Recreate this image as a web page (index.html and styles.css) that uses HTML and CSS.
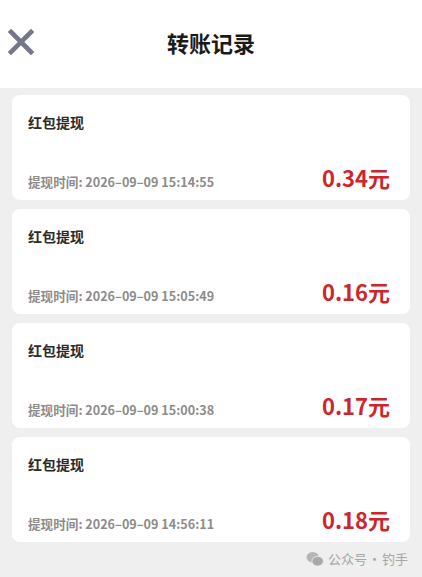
FILE: index.html
```html
<!DOCTYPE html>
<html lang="zh-CN">
<head>
    <meta charset="UTF-8">
    <meta name="viewport" content="width=device-width, initial-scale=1.0">
    <title>转账记录</title>
    <link rel="stylesheet" href="styles.css">
</head>
<body>
    <div class="header">
        <span class="close">
            <svg width="26" height="26" viewBox="0 0 26 26">
                <path d="M3 3 L23 23 M23 3 L3 23" stroke="#74778a" stroke-width="4.6" stroke-linecap="square" fill="none"/>
            </svg>
        </span>
        <h1 class="title">转账记录</h1>
        <span></span>
    </div>

    <div class="list">
        <div class="card">
            <div class="card-title">红包提现</div>
            <div class="card-row">
                <span class="time">提现时间: 2026–09–09 15:14:55</span>
                <span class="amount">0.34元</span>
            </div>
        </div>
        <div class="card">
            <div class="card-title">红包提现</div>
            <div class="card-row">
                <span class="time">提现时间: 2026–09–09 15:05:49</span>
                <span class="amount">0.16元</span>
            </div>
        </div>
        <div class="card">
            <div class="card-title">红包提现</div>
            <div class="card-row">
                <span class="time">提现时间: 2026–09–09 15:00:38</span>
                <span class="amount">0.17元</span>
            </div>
        </div>
        <div class="card">
            <div class="card-title">红包提现</div>
            <div class="card-row">
                <span class="time">提现时间: 2026–09–09 14:56:11</span>
                <span class="amount">0.18元</span>
            </div>
        </div>
    </div>

    <div class="watermark">
        <svg width="18" height="16" viewBox="0 0 20 18">
            <ellipse cx="7.5" cy="7" rx="7" ry="6" fill="#b5b5b5"/>
            <ellipse cx="13" cy="11.5" rx="6.5" ry="5.5" fill="#a9a9a9" stroke="#efefef" stroke-width="1"/>
        </svg>
        <span>公众号<span class="dot">·</span>钓手</span>
    </div>
</body>
</html>
```

FILE: styles.css
```css
body {
    margin: 0;
    font-family: "Noto Sans CJK SC", "Noto Sans", sans-serif;
    background-color: #efefef;
    width: 422px;
    min-height: 577px;
}
.header {
    display: grid;
    grid-template-columns: 60px 1fr 60px;
    align-items: center;
    height: 88px;
    background-color: #fff;
    box-sizing: border-box;
    padding-bottom: 4px;
}
.close {
    display: flex;
    padding-left: 8px;
}
.title {
    margin: 0;
    text-align: center;
    font-size: 22px;
    line-height: 30px;
    font-weight: bold;
    color: #1a1a1a;
}
.list {
    display: flex;
    flex-direction: column;
    gap: 9px;
    padding: 7px 12px 0 12px;
}
.card {
    display: flex;
    flex-direction: column;
    height: 105px;
    box-sizing: border-box;
    padding: 17px 20px 9px 16px;
    background-color: #fff;
    border-radius: 8px;
}
.card-title {
    font-size: 14px;
    line-height: 20px;
    font-weight: bold;
    color: #2b2b2b;
}
.card-row {
    display: flex;
    justify-content: space-between;
    align-items: baseline;
    margin-top: auto;
}
.time {
    font-size: 12.6px;
    font-weight: bold;
    color: #8c8c8c;
}
.amount {
    font-size: 22px;
    line-height: 28px;
    font-weight: bold;
    color: #cc262c;
}
.watermark {
    display: flex;
    justify-content: flex-end;
    align-items: center;
    gap: 4px;
    margin-top: 7px;
    padding-right: 14px;
    font-size: 13px;
    line-height: 20px;
    color: #a6a6a6;
}
.dot {
    margin: 0 1px;
}
```
